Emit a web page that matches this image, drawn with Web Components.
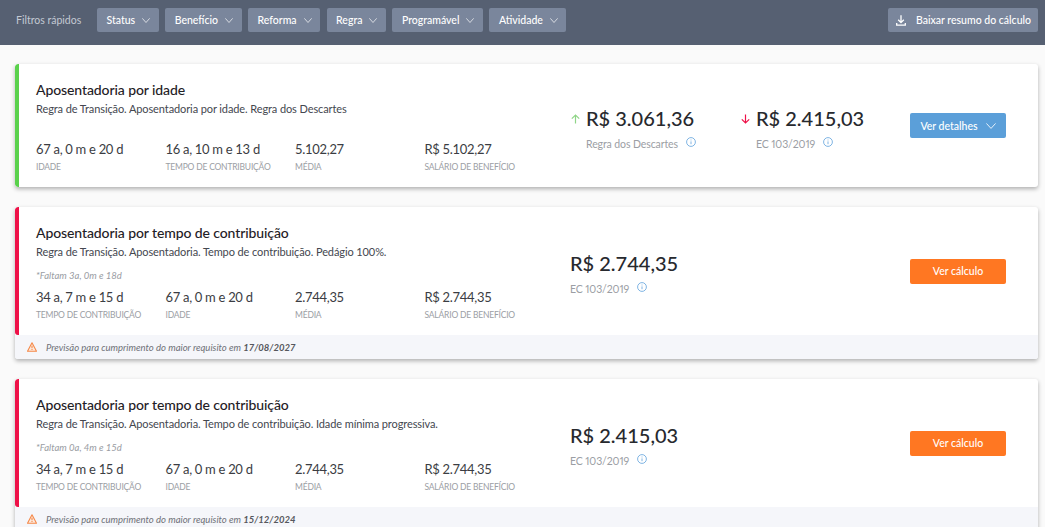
<!DOCTYPE html>
<html lang="pt-BR">
<head>
<meta charset="utf-8">
<title>Resumo do cálculo</title>
<style>
  html, body { margin: 0; height: 527px; overflow: hidden; background: #fafafa; }
  body { font-family: Lato, "Liberation Sans", sans-serif; color: #27292e; }
</style>
</head>
<body>
<filter-bar>
  <filter-chip>Status</filter-chip>
  <filter-chip>Benefício</filter-chip>
  <filter-chip>Reforma</filter-chip>
  <filter-chip>Regra</filter-chip>
  <filter-chip>Programável</filter-chip>
  <filter-chip>Atividade</filter-chip>
</filter-bar>
<card-list>
  <benefit-card status="ok" heading="Aposentadoria por idade" rule="Regra de Transição. Aposentadoria por idade. Regra dos Descartes">
    <metric-item slot="metrics" value="67 a, 0 m e 20 d" label="IDADE"></metric-item>
    <metric-item slot="metrics" value="16 a, 10 m e 13 d" label="TEMPO DE CONTRIBUIÇÃO"></metric-item>
    <metric-item slot="metrics" value="5.102,27" label="MÉDIA"></metric-item>
    <metric-item slot="metrics" value="R$ 5.102,27" label="SALÁRIO DE BENEFÍCIO"></metric-item>
    <price-block slot="prices" value="R$ 3.061,36" label="Regra dos Descartes" trend="up"></price-block>
    <price-block slot="prices" value="R$ 2.415,03" label="EC 103/2019" trend="down"></price-block>
    <action-button slot="action" kind="details">Ver detalhes</action-button>
  </benefit-card>
  <benefit-card status="pending" heading="Aposentadoria por tempo de contribuição" rule="Regra de Transição. Aposentadoria. Tempo de contribuição. Pedágio 100%." missing="*Faltam 3a, 0m e 18d" forecast="17/08/2027">
    <metric-item slot="metrics" value="34 a, 7 m e 15 d" label="TEMPO DE CONTRIBUIÇÃO"></metric-item>
    <metric-item slot="metrics" value="67 a, 0 m e 20 d" label="IDADE"></metric-item>
    <metric-item slot="metrics" value="2.744,35" label="MÉDIA"></metric-item>
    <metric-item slot="metrics" value="R$ 2.744,35" label="SALÁRIO DE BENEFÍCIO"></metric-item>
    <price-block slot="prices" value="R$ 2.744,35" label="EC 103/2019"></price-block>
    <action-button slot="action">Ver cálculo</action-button>
  </benefit-card>
  <benefit-card status="pending" heading="Aposentadoria por tempo de contribuição" rule="Regra de Transição. Aposentadoria. Tempo de contribuição. Idade mínima progressiva." missing="*Faltam 0a, 4m e 15d" forecast="15/12/2024">
    <metric-item slot="metrics" value="34 a, 7 m e 15 d" label="TEMPO DE CONTRIBUIÇÃO"></metric-item>
    <metric-item slot="metrics" value="67 a, 0 m e 20 d" label="IDADE"></metric-item>
    <metric-item slot="metrics" value="2.744,35" label="MÉDIA"></metric-item>
    <metric-item slot="metrics" value="R$ 2.744,35" label="SALÁRIO DE BENEFÍCIO"></metric-item>
    <price-block slot="prices" value="R$ 2.415,03" label="EC 103/2019"></price-block>
    <action-button slot="action">Ver cálculo</action-button>
  </benefit-card>
</card-list>

<script>
const CHEVRON = (w, h, color) => `
  <svg width="${w}" height="${h}" viewBox="0 0 12 7" preserveAspectRatio="none" fill="none" stroke="${color}" stroke-width="1" aria-hidden="true">
    <path d="M.5 .5 L6 6.3 L11.5 .5"/>
  </svg>`;

class FilterBar extends HTMLElement {
  constructor() {
    super();
    this.attachShadow({ mode: "open" });
  }

  connectedCallback() {
    this.shadowRoot.innerHTML = `
      <style>
        :host {
          display: flex;
          align-items: center;
          height: 45px;
          padding: 0 7px 5px 16px;
          box-sizing: border-box;
          background: #566072;
          font-size: 10.5px;
        }
        .title { color: #c3c9d3; width: 81px; }
        .chips { display: flex; gap: 6.5px; flex: 1; }
        .download {
          display: flex;
          align-items: center;
          gap: 10px;
          width: 150px;
          height: 24px;
          padding-left: 8px;
          box-sizing: border-box;
          border-radius: 2px;
          background: #7a869c;
          color: #fff;
          font-weight: 500;
        }
      </style>
      <span class="title">Filtros rápidos</span>
      <div class="chips"><slot></slot></div>
      <div class="download">
        <svg width="10" height="11" viewBox="0 0 10 11" fill="none" stroke="#fff" stroke-width="1.3" aria-hidden="true">
          <path d="M5 .3 V7.3 M2.2 4.8 L5 7.6 L7.8 4.8 M.7 8 V10.2 H9.3 V8"/>
        </svg>
        <span>Baixar resumo do cálculo</span>
      </div>
    `;
  }
}

class FilterChip extends HTMLElement {
  constructor() {
    super();
    this.attachShadow({ mode: "open" });
  }

  connectedCallback() {
    this.shadowRoot.innerHTML = `
      <style>
        :host {
          display: inline-flex;
          align-items: center;
          gap: 7px;
          height: 24px;
          padding: 0 8.5px 0 9.5px;
          border-radius: 2px;
          background: #7a869c;
          color: #fff;
          font-size: 10.5px;
          font-weight: 500;
        }
      </style>
      <slot></slot>
      ${CHEVRON(8, 5, "#fff")}
    `;
  }
}

class CardList extends HTMLElement {
  constructor() {
    super();
    this.attachShadow({ mode: "open" });
  }

  connectedCallback() {
    this.shadowRoot.innerHTML = `
      <style>
        :host {
          display: flex;
          flex-direction: column;
          gap: 20px;
          padding: 19px 7px 0 15px;
        }
      </style>
      <slot></slot>
    `;
  }
}

class BenefitCard extends HTMLElement {
  constructor() {
    super();
    this.attachShadow({ mode: "open" });
  }

  connectedCallback() {
    const missing = this.getAttribute("missing");
    const forecast = this.getAttribute("forecast");
    const barColor = this.getAttribute("status") === "ok" ? "#5ad14c" : "#ee1148";

    this.shadowRoot.innerHTML = `
      <style>
        :host {
          display: block;
          background: #fff;
          border-radius: 3px;
          box-shadow: 0 2px 4px rgba(0, 0, 0, .3);
          overflow: hidden;
        }
        .body {
          display: grid;
          grid-template-columns: 551px 340px 96px;
          align-items: center;
          border-left: 4px solid ${barColor};
          border-radius: 3px 0 0 3px;
          padding-right: 32px;
          height: ${forecast ? 128 : 123}px;
        }
        .info { padding: 3px 0 0 17px; }
        h2 { margin: 0; font-size: 14px; line-height: 20px; font-weight: 500; letter-spacing: -.1px; color: #1f2126; }
        .rule { font-size: 11px; line-height: 16px; letter-spacing: -.1px; margin-top: 1px; color: #44474f; }
        .missing { font-size: 9.5px; line-height: 12px; font-style: italic; color: #9a9da3; margin-top: 10px; }
        .spacer { height: 17px; }
        .metrics {
          display: grid;
          grid-template-columns: repeat(4, 129.5px);
          margin-top: 5px;
        }
        .prices { display: flex; padding-top: 4px; }
        .strip {
          display: flex;
          align-items: center;
          gap: 9px;
          height: 24px;
          padding-left: 12px;
          background: #f5f6fa;
          font-size: 9.5px;
          font-style: italic;
          color: #6e7077;
        }
        b { color: #55575d; }
      </style>
      <div class="body">
        <div class="info">
          <h2>${this.getAttribute("heading")}</h2>
          <div class="rule">${this.getAttribute("rule")}</div>
          ${missing ? `<div class="missing">${missing}</div>` : `<div class="spacer"></div>`}
          <div class="metrics"><slot name="metrics"></slot></div>
        </div>
        <div class="prices"><slot name="prices"></slot></div>
        <slot name="action"></slot>
      </div>
      ${forecast ? `
        <div class="strip">
          <svg width="10" height="10" viewBox="0 0 10 10" fill="#fde9dc" stroke="#f5894a" stroke-width="1.1" stroke-linejoin="round" aria-hidden="true">
            <path d="M5 .8 L9.5 9.2 H.5 Z M5 3.8 V6.3 M5 7 V7.9"/>
          </svg>
          <span>Previsão para cumprimento do maior requisito em <b>${forecast}</b></span>
        </div>` : ""}
    `;
  }
}

class MetricItem extends HTMLElement {
  constructor() {
    super();
    this.attachShadow({ mode: "open" });
  }

  connectedCallback() {
    this.shadowRoot.innerHTML = `
      <style>
        :host { display: block; }
        .value { font-size: 13px; line-height: 20px; letter-spacing: -.3px; color: #3b3d43; }
        .label { font-size: 8.5px; line-height: 14px; margin-top: 1px; letter-spacing: -.2px; color: #9b9ea4; white-space: nowrap; }
      </style>
      <div class="value">${this.getAttribute("value")}</div>
      <div class="label">${this.getAttribute("label")}</div>
    `;
  }
}

class PriceBlock extends HTMLElement {
  constructor() {
    super();
    this.attachShadow({ mode: "open" });
  }

  arrow(trend) {
    if (trend === "up") {
      return `<svg class="arrow" width="9" height="10" viewBox="0 0 9 10" fill="none" stroke="#8fd587" stroke-width="1.2" aria-hidden="true"><path d="M4.5 9.5 V1 M.8 4.6 L4.5 1 L8.2 4.6"/></svg>`;
    }
    return `<svg class="arrow" width="9" height="10" viewBox="0 0 9 10" fill="none" stroke="#ee1148" stroke-width="1.2" aria-hidden="true"><path d="M4.5 .5 V9 M.8 5.4 L4.5 9 L8.2 5.4"/></svg>`;
  }

  connectedCallback() {
    const trend = this.getAttribute("trend");
    this.shadowRoot.innerHTML = `
      <style>
        :host {
          display: grid;
          grid-template-columns: ${trend ? "16px" : ""} auto;
          width: ${trend ? 170 : 340}px;
          align-items: center;
        }
        .value { font-size: 20px; line-height: 28px; font-weight: 500; color: #27292e; white-space: nowrap; }
        .label {
          display: flex;
          align-items: center;
          gap: 8px;
          grid-column: ${trend ? 2 : 1};
          font-size: 10.5px;
          line-height: 16px;
          letter-spacing: -.1px;
          font-variant-numeric: proportional-nums;
          margin-top: 4px;
          color: #9b9ea4;
        }
        .arrow { margin-top: 3px; margin-left: 1px; }
        .info { margin-top: -4px; }
      </style>
      ${trend ? this.arrow(trend) : ""}
      <div class="value">${this.getAttribute("value")}</div>
      <div class="label">
        <span>${this.getAttribute("label")}</span>
        <svg class="info" width="10" height="10" viewBox="0 0 10 10" fill="none" stroke="#5fa1dc" stroke-width=".8" aria-hidden="true">
          <circle cx="5" cy="5" r="4.4"/><path d="M5 4.4 V7.2 M5 2.6 V3.4"/>
        </svg>
      </div>
    `;
  }
}

class ActionButton extends HTMLElement {
  constructor() {
    super();
    this.attachShadow({ mode: "open" });
  }

  connectedCallback() {
    const details = this.getAttribute("kind") === "details";
    this.shadowRoot.innerHTML = `
      <style>
        :host {
          display: flex;
          align-items: center;
          justify-content: center;
          gap: 8px;
          height: 25px;
          border-radius: 2px;
          background: ${details ? "#5b9fd9" : "#ff7722"};
          color: #fff;
          font-size: 10.5px;
          font-weight: 500;
        }
      </style>
      <slot></slot>
      ${details ? CHEVRON(10, 6, "#fff") : ""}
    `;
  }
}

customElements.define("filter-bar", FilterBar);
customElements.define("filter-chip", FilterChip);
customElements.define("card-list", CardList);
customElements.define("benefit-card", BenefitCard);
customElements.define("metric-item", MetricItem);
customElements.define("price-block", PriceBlock);
customElements.define("action-button", ActionButton);
</script>
</body>
</html>
